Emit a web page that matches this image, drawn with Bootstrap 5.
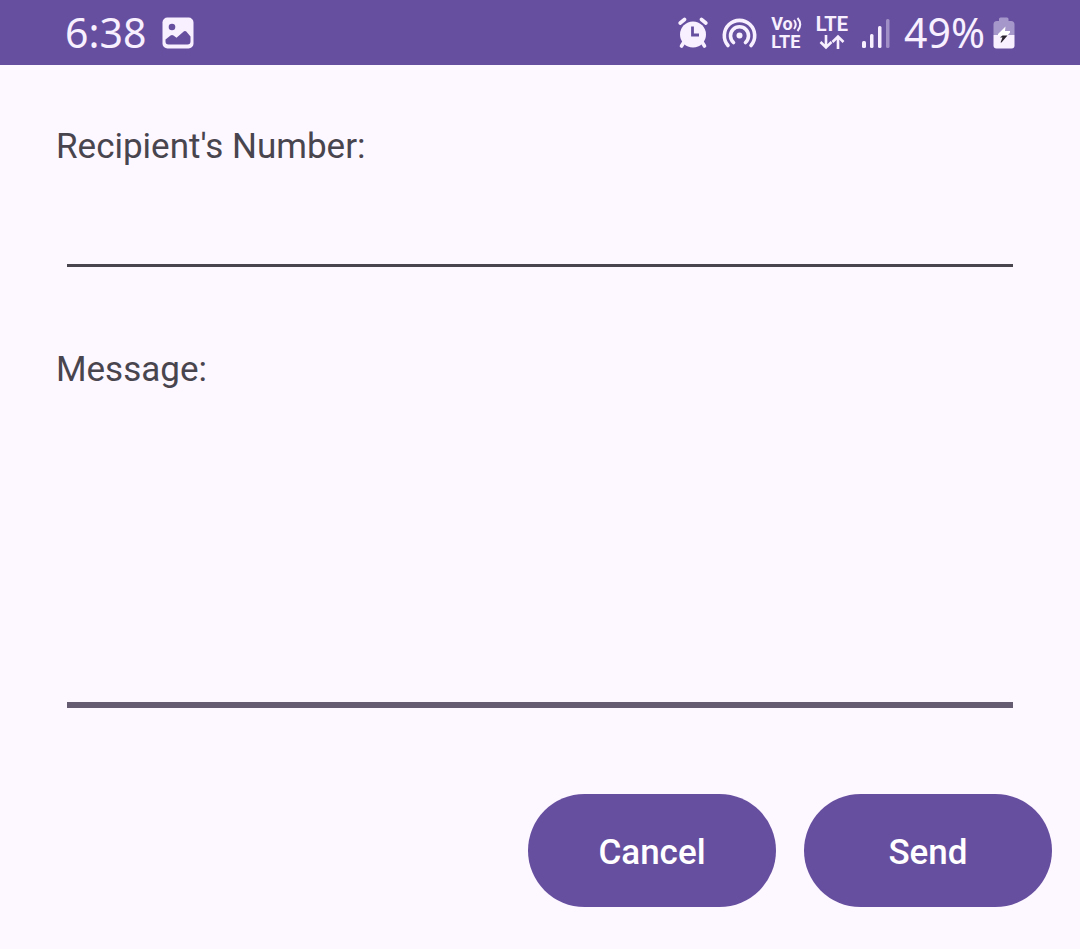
<!DOCTYPE html>
<html lang="en">
<head>
<meta charset="utf-8">
<meta name="viewport" content="width=device-width, initial-scale=1">
<title>Send message</title>
<link href="https://cdn.jsdelivr.net/npm/bootstrap@5.3.0/dist/css/bootstrap.min.css" rel="stylesheet">
<style>
  :root { --brand: #674fa0; --surface: #fdf7ff; --ink: #49454e; }
  body { background: var(--surface); color: var(--ink); font-family: Roboto, sans-serif; font-size: 35px; line-height: 40px; }
  .status-bar { background: var(--brand); color: #f8f0ff; height: 65px; padding: 0 65px; }
  .status-bar svg { display: block; flex: none; }
  .status-text { font: 400 41px/62px "Noto Sans", sans-serif; padding-bottom: 2px; }
  .status-icons { gap: 14px; }
  .status-icons .battery { margin-left: -6px; }
  .net { font: 700 18px/18px Roboto, sans-serif; }
  .net-wide { font-size: 20px; }
  .message-form { padding: 62px 28px 42px; }
  .field-group { padding: 0 28px; }
  .line-input { display: block; width: auto; margin: 0 11px; border: 0; border-radius: 0; background: transparent; color: var(--ink); outline: 0; padding: 0; align-self: stretch; min-width: 0; resize: none; }
  .number-input { height: 100px; border-bottom: 3px solid var(--ink); }
  .message-input { height: 318px; border-bottom: 6px solid #655c72; }
  .second-field { margin-top: 83px; }
  .actions { margin-top: 86px; gap: 28px; }
  .btn-pill { --bs-btn-color: #fff; --bs-btn-bg: var(--brand); --bs-btn-hover-color: #fff; --bs-btn-hover-bg: #5b4491; --bs-btn-active-color: #fff; --bs-btn-active-bg: #503b82; width: 248px; height: 113px; border: 0; padding: 10px 24px 6px; font-size: 35px; font-weight: 500; line-height: 40px; }
</style>
</head>
<body>
<header class="status-bar d-flex align-items-center justify-content-between">
  <div class="d-flex align-items-center">
    <span class="status-text">6:38</span>
    <svg class="ms-3" width="32" height="32" viewBox="0 0 32 32" role="img" aria-label="Picture saved">
      <rect x="0.5" y="0.5" width="31" height="31" rx="5" fill="#f8f0ff"/>
      <circle cx="10" cy="10" r="3.3" fill="#674fa0"/>
      <path d="M3.500 24.500V22.500L8.500 18.500Q10 17.500 11.500 18.500L14.500 20.800L22 14.300Q23.200 13.500 24.300 14.500L28.500 19.500V24.500Q28.500 27.500 25.500 27.500H6.500Q3.500 27.500 3.500 24.500Z" fill="#674fa0"/>
    </svg>
  </div>
  <div class="status-icons d-flex align-items-center">
    <svg width="30" height="32" viewBox="0 0 30 32" role="img" aria-label="Alarm">
      <g stroke="#f8f0ff" stroke-width="3.600" stroke-linecap="round"><path d="M2.200 6L6.500 2.500M27.800 6L23.500 2.500"/><path d="M6 25L3.500 29M24 25L26.500 29"/></g>
      <circle cx="15" cy="17.500" r="13" fill="#f8f0ff"/>
      <path d="M14.500 9.500V18H21" fill="none" stroke="#674fa0" stroke-width="2.800"/>
    </svg>
    <svg width="35" height="32" viewBox="0 0 35 32" role="img" aria-label="Hotspot">
      <g fill="none" stroke="#f8f0ff" stroke-width="3.600" stroke-linecap="round"><path d="M6 28.500A15.200 15.200 0 1 1 29 28.500"/><path d="M11.500 25.500A9 9 0 1 1 23.500 25.500"/></g>
      <circle cx="17.500" cy="18.500" r="3" fill="#f8f0ff"/>
    </svg>
    <div class="net d-flex flex-column">
      <span class="d-flex align-items-center">Vo<svg width="9" height="16" viewBox="0 0 9 16" aria-hidden="true"><path d="M1 4Q4.500 8.500 1 13M4.500 2Q10 8.500 4.500 15" fill="none" stroke="#f8f0ff" stroke-width="2"/></svg></span>
      <span>LTE</span>
    </div>
    <div class="net net-wide d-flex flex-column align-items-center">
      <span>LTE</span>
      <svg width="26" height="17" viewBox="0 0 26 17" aria-hidden="true"><path d="M7 2V14M1.500 9L7 14.500L12.500 9M19 16V4M13.500 9L19 3.500L24.500 9" fill="none" stroke="#f8f0ff" stroke-width="2.600"/></svg>
    </div>
    <svg width="28" height="32" viewBox="0 0 28 32" role="img" aria-label="Signal strength">
      <g fill="#f8f0ff"><rect y="24" width="4" height="7" rx="1.500"/><rect x="8" y="17" width="3.500" height="14" rx="1.500"/><rect x="16" y="9" width="3.500" height="22" rx="1.500"/><rect x="24" y="2" width="3.500" height="29" rx="1.500" opacity=".4"/></g>
    </svg>
    <span class="status-text">49%</span>
    <svg class="battery" width="22" height="32" viewBox="0 0 22 32" role="img" aria-label="Battery charging">
      <path d="M6 4V2Q6 .5 7.500 .5H14Q15.500 .5 15.500 2V4H18Q21.500 4 21.500 7.500V18H.5V7.500Q.5 4 4 4Z" fill="#a697ca"/>
      <path d="M.5 18H21.500V28.500Q21.500 31.500 18.500 31.500H3.500Q.5 31.500 .5 28.500Z" fill="#f8f0ff"/>
      <path d="M12.500 9.500L5 17V18.500H14.500L17 15.500V14H12Z" fill="#fff"/>
      <path d="M9.500 18.500H14.500L8.500 25.500H7.500L9.500 20.500H7Z" fill="#29232e"/>
    </svg>
  </div>
</header>
<main>
  <form class="message-form">
    <div class="field-group d-flex flex-column">
      <label for="recipient">Recipient's Number:</label>
      <input class="line-input number-input" id="recipient" type="tel">
    </div>
    <div class="field-group second-field d-flex flex-column">
      <label for="message">Message:</label>
      <textarea class="line-input message-input" id="message"></textarea>
    </div>
    <div class="actions d-flex justify-content-end">
      <button class="btn btn-pill rounded-pill" type="button">Cancel</button>
      <button class="btn btn-pill rounded-pill" type="submit">Send</button>
    </div>
  </form>
</main>
<script src="https://cdn.jsdelivr.net/npm/bootstrap@5.3.0/dist/js/bootstrap.bundle.min.js"></script>
</body>
</html>
